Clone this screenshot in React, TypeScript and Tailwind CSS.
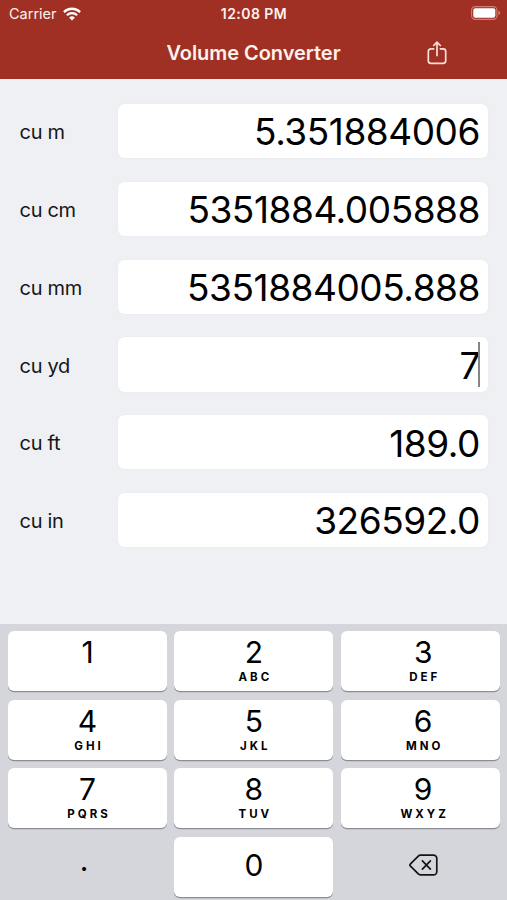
import { useState } from "react";
import clsx from "clsx";

const FIELDS = [
	{ unit: "cu m", value: "5.351884006" },
	{ unit: "cu cm", value: "5351884.005888" },
	{ unit: "cu mm", value: "5351884005.888" },
	{ unit: "cu yd", value: "7" },
	{ unit: "cu ft", value: "189.0" },
	{ unit: "cu in", value: "326592.0" },
];

const KEYS = [
	{ digit: "1", letters: "" },
	{ digit: "2", letters: "ABC" },
	{ digit: "3", letters: "DEF" },
	{ digit: "4", letters: "GHI" },
	{ digit: "5", letters: "JKL" },
	{ digit: "6", letters: "MNO" },
	{ digit: "7", letters: "PQRS" },
	{ digit: "8", letters: "TUV" },
	{ digit: "9", letters: "WXYZ" },
];

function WifiIcon() {
	return (
		<svg className="h-[14px] w-[18px]" viewBox="0 0 18 14" fill="none" stroke="#fff" strokeWidth="2.3">
			<path d="M.9 5.1a11.5 11.5 0 0 1 16.2 0" />
			<path d="M3.9 8.2a7.2 7.2 0 0 1 10.2 0" />
			<path d="M9 13.6 6.1 10.7a4.2 4.2 0 0 1 5.8 0Z" fill="#fff" stroke="none" />
		</svg>
	);
}

function BatteryIcon() {
	return (
		<svg className="h-[14px] w-[30px]" viewBox="0 0 30 14" fill="none">
			<rect x=".6" y=".6" width="25.3" height="12.8" rx="3.6" stroke="#cd8076" strokeWidth="1.1" />
			<rect x="2.3" y="2.3" width="22" height="9.4" rx="2" fill="#fff" />
			<path d="M27.4 4.8c1.1.4 1.8 1.2 1.8 2.2s-.7 1.8-1.8 2.2Z" fill="#cd8076" />
		</svg>
	);
}

function ShareIcon() {
	return (
		<svg className="h-6 w-5" viewBox="0 0 20 24" fill="none" stroke="#fbe0da" strokeWidth="1.7" strokeLinecap="round" strokeLinejoin="round">
			<path d="M6.6 7.9H3.9a2.6 2.6 0 0 0-2.6 2.6v9.2a2.6 2.6 0 0 0 2.6 2.6h12.2a2.6 2.6 0 0 0 2.6-2.6v-9.2a2.6 2.6 0 0 0-2.6-2.6h-2.7" />
			<path d="M10 14.6V1.4M6.7 4.5 10 1.2l3.3 3.3" />
		</svg>
	);
}

function DeleteIcon() {
	return (
		<svg className="h-[22px] w-[29px]" viewBox="0 0 29 22" fill="none" stroke="#141416" strokeWidth="1.7" strokeLinecap="round" strokeLinejoin="round">
			<path d="M11.4 1.2h13a3.4 3.4 0 0 1 3.4 3.4v12.8a3.4 3.4 0 0 1-3.4 3.4h-13a3 3 0 0 1-2.1-.9L1.5 12.2a1.7 1.7 0 0 1 0-2.4l7.8-7.7a3 3 0 0 1 2.1-.9Z" />
			<path d="m13.4 6.9 8 8.2m0-8.2-8 8.2" />
		</svg>
	);
}

export default function App() {
	const [active, setActive] = useState("cu yd");

	return (
		<div className="flex h-[900px] w-[507px] flex-col overflow-hidden bg-[#eef0f4] font-['Inter','Liberation_Sans',sans-serif] text-black">
			<header className="h-[79px] shrink-0 bg-[#a03024] text-[#fff1ed]">
				<div className="grid h-[27px] grid-cols-3 items-center pr-[6px] pl-[9px]">
					<div className="flex items-center gap-[6px]">
						<span className="text-[14.5px]">Carrier</span>
						<WifiIcon />
					</div>
					<span className="pr-[2px] text-center text-[14px] font-semibold tracking-[0.45px]">12:08 PM</span>
					<div className="flex justify-end pb-px">
						<BatteryIcon />
					</div>
				</div>
				<div className="grid h-[51px] grid-cols-[1fr_auto_1fr] items-center">
					<span />
					<h1 className="text-[20px] font-semibold tracking-[-0.05px]">Volume Converter</h1>
					<button className="ml-[86.5px] w-5">
						<ShareIcon />
					</button>
				</div>
			</header>

			<main className="flex flex-1 flex-col gap-[23.5px] pt-[25px] pr-[19px] pl-[19.5px]">
				{FIELDS.map(({ unit, value }) => (
					<div key={unit} className="flex h-[54.3px] items-center" onClick={() => setActive(unit)}>
						<span className="w-[98px] pt-[2px] text-[20px] tracking-[-0.3px] text-[#161618]">{unit}</span>
						<div className="flex h-full flex-1 items-center justify-end rounded-[6px] bg-white pr-[8px] shadow-[0_0_1px_#d5d6da]">
							<span className="pt-[2px] text-[37px] tracking-[-0.45px]">{value}</span>
							{active === unit && <span className="-ml-[2px] h-[45px] w-[2px] bg-[#858585]" />}
						</div>
					</div>
				))}
			</main>

			<div className="grid h-[276px] shrink-0 auto-rows-[60px] grid-cols-3 gap-x-[7.3px] gap-y-[8.6px] bg-[#d5d6dc] pt-[7px] pr-[7.3px] pl-2">
				{KEYS.map(({ digit, letters }, i) => (
					<button
						key={digit}
						className={clsx("flex flex-col items-center rounded-[6px] bg-white pt-[3px] shadow-[0_1.3px_0_#8d8e93]", i % 3 === 2 && "pl-[6px]")}
					>
						<span className="text-[30px] leading-[36px]">{digit}</span>
						<span className={clsx("text-[11.5px] leading-[14px] font-bold tracking-[3px]", letters && "pl-[3px]")}>{letters}</span>
					</button>
				))}
				<button className="flex items-center justify-center pr-[7px] pb-[13px] text-[30px]">.</button>
				<button className="flex items-center justify-center rounded-[6px] bg-white pb-[2px] text-[30px] shadow-[0_1.3px_0_#8d8e93]">0</button>
				<button className="flex items-center justify-center pb-[4px] pl-[6px]">
					<DeleteIcon />
				</button>
			</div>
		</div>
	);
}
